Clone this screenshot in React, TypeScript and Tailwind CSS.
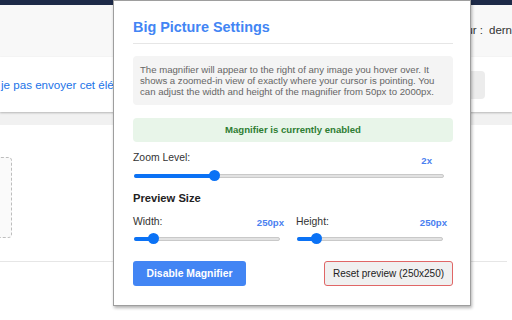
import React from 'react';

const FONT = "font-['Liberation_Sans',Arial,sans-serif]";

interface SliderProps {
  value: number;
  min: number;
  max: number;
  className?: string;
}

// Track with a blue fill and a round thumb, drawn like Chrome's native range
const Slider: React.FC<SliderProps> = ({ value, min, max, className }) => {
  const pct = (value - min) / (max - min);
  const thumb = 11;
  return (
    <div className={`relative h-[11px] flex items-center ${className ?? ''}`}>
      <div className="w-full h-[4px] rounded-full bg-[#e2e2e2] border border-[#c9c9c9]" />
      <div
        className="absolute left-0 h-[4px] rounded-full bg-[#0b72f5]"
        style={{ width: `calc(${pct} * (100% - ${thumb}px) + ${thumb / 2}px)` }}
      />
      <div
        className="absolute top-0 w-[11px] h-[11px] rounded-full bg-[#0b72f5]"
        style={{ left: `calc(${pct} * (100% - ${thumb}px))` }}
      />
    </div>
  );
};

const Background: React.FC = () => (
  <div className="w-[512px] h-[320px] overflow-hidden bg-white">
    <div className="h-[5px] bg-[#1d2a48]" />
    <div className="h-[52px] bg-[#f8f8f8] flex items-center whitespace-nowrap text-[11.5px] text-[#333] overflow-hidden">
      <span className="w-[483px] shrink-0 text-right">Trier par valeur :</span>
      <span className="ml-[6px] shrink-0">dernier ajout</span>
    </div>
    <div className="h-[55px] bg-white flex items-center justify-between shadow-[0_1px_2px_rgba(0,0,0,0.25)] relative">
      <span className="pl-[1px] whitespace-nowrap text-[11.6px] text-[#1a73e8]">je pas envoyer cet élément ?</span>
      <div className="w-[60px] h-[28px] mr-[27px] rounded-[4px] bg-[#ececec] shrink-0" />
    </div>
    <div className="h-[13px] bg-[#f1f1f1]" />
    <div className="pt-[32px] h-[137px] border-b border-[#e6e6e6] mr-[5px]">
      <div className="w-[40px] h-[81px] ml-[-28px] rounded-[4px] border border-dashed border-[#bdbdbd] bg-[#fafafa]" />
    </div>
  </div>
);

const Popup: React.FC = () => (
  <div className="absolute top-0 left-[113px] w-[358px] h-[306px] bg-white border-x border-b border-t border-[#9e9e9e] shadow-[1px_2px_3px_rgba(0,0,0,0.3)] pl-[19px] pr-[17px] pt-[17px] flex flex-col">
    <h1 className="text-[14.4px] leading-[18px] font-bold text-[#4285f4] pb-[7px] border-b border-[#e6e6e6]">
      Big Picture Settings
    </h1>

    <div className="mt-[12px] rounded-[4px] bg-[#f4f4f4] px-[7px] py-[8px] text-[9.6px] leading-[11px] text-[#666]">
      <span className="block whitespace-nowrap">The magnifier will appear to the right of any image you hover over. It</span>
      <span className="block whitespace-nowrap">shows a zoomed-in view of exactly where your cursor is pointing. You</span>
      <span className="block whitespace-nowrap">can adjust the width and height of the magnifier from 50px to 2000px.</span>
    </div>

    <div className="mt-[13px] h-[24px] rounded-[4px] bg-[#e8f5e9] flex items-center justify-center text-[9.6px] font-bold text-[#2e7d32]">
      Magnifier is currently enabled
    </div>

    <div className="mt-[10px] flex justify-between items-start">
      <span className="text-[10.4px] leading-[12px] text-[#333]">Zoom Level:</span>
      <span className="mt-[3px] mr-[21px] text-[9.6px] leading-[12px] font-bold text-[#4a80f0]">2x</span>
    </div>
    <Slider value={2} min={1} max={5} className="mt-[3px] ml-[1px] mr-[9px]" />

    <h2 className="mt-[10px] text-[11.2px] leading-[14px] font-bold text-[#222]">Preview Size</h2>

    <div className="mt-[11px] flex gap-[12px]">
      {['Width:', 'Height:'].map((label) => (
        <div key={label} className="w-[151px] flex flex-col">
          <div className="flex justify-between items-start">
            <span className="text-[10.4px] leading-[12px] text-[#333]">{label}</span>
            <span className="mt-[1px] text-[9.6px] leading-[12px] font-bold text-[#4a80f0]">250px</span>
          </div>
          <Slider value={250} min={50} max={2000} className="mt-[4px] ml-[1px] mr-[4px]" />
        </div>
      ))}
    </div>

    <div className="mt-[17px] flex justify-between">
      <button className="w-[113px] h-[25px] rounded-[3px] bg-[#4285f4] text-white text-[10.4px] font-bold">
        Disable Magnifier
      </button>
      <button className="w-[129px] h-[25px] rounded-[3px] bg-[#f0f0f0] border border-[#e06666] text-[#222] text-[10px]">
        Reset preview (250x250)
      </button>
    </div>
  </div>
);

export default function App() {
  return (
    <div className={`relative w-[512px] h-[320px] overflow-hidden ${FONT}`}>
      <Background />
      <Popup />
    </div>
  );
}
